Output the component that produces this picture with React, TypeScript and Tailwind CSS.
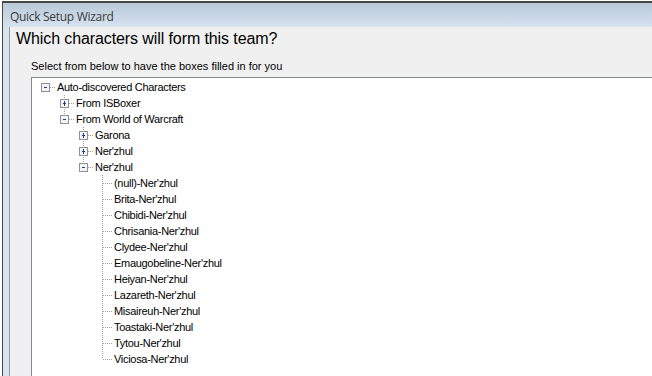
import React from 'react';

type Node = {
  label: string;
  level: number;
  box?: 'plus' | 'minus';
  last?: boolean;
};

const names = [
  '(null)',
  'Brita',
  'Chibidi',
  'Chrisania',
  'Clydee',
  'Emaugobeline',
  'Heiyan',
  'Lazareth',
  'Misaireuh',
  'Toastaki',
  'Tytou',
  'Viciosa',
];

const nodes: Node[] = [
  { label: 'Auto-discovered Characters', level: 0, box: 'minus', last: true },
  { label: 'From ISBoxer', level: 1, box: 'plus' },
  { label: 'From World of Warcraft', level: 1, box: 'minus', last: true },
  { label: 'Garona', level: 2, box: 'plus' },
  { label: "Ner'zhul", level: 2, box: 'plus' },
  { label: "Ner'zhul", level: 2, box: 'minus', last: true },
  ...names.map((n, i) => ({
    label: `${n}-Ner'zhul`,
    level: 3,
    last: i === names.length - 1,
  })),
];

function Gutter({ node }: { node: Node }) {
  const cx = 13 + 19 * node.level;
  const w = cx + 10;
  const x = cx + 0.5;
  return (
    <svg width={w} height={16} className="shrink-0" shapeRendering="crispEdges">
      {node.level > 0 && (
        <line x1={x} y1={0} x2={x} y2={node.last ? 8 : 16} stroke="#a0a0a0" strokeDasharray="1 1" />
      )}
      <line x1={node.box ? cx + 5 : cx + 1} y1={8.5} x2={w} y2={8.5} stroke="#a0a0a0" strokeDasharray="1 1" />
      {node.box && (
        <g>
          <rect x={cx - 3.5} y={4.5} width={8} height={8} fill="#f4f4f4" stroke="#919191" />
          <line x1={cx - 1} y1={8.5} x2={cx + 2} y2={8.5} stroke="#1e3e8a" />
          {node.box === 'plus' && <line x1={x} y1={6} x2={x} y2={11} stroke="#1e3e8a" />}
        </g>
      )}
    </svg>
  );
}

export default function App() {
  return (
    <div className="w-[652px] h-[376px] bg-white overflow-hidden pt-px pl-[2px] font-['Liberation_Sans',Arial,sans-serif]">
      <div className="h-full flex flex-col border-t-2 border-l border-[#474747] bg-[#d6e3f0]">
        <div className="h-[24px] shrink-0 flex items-center pl-[7px] pt-[3px] bg-gradient-to-b from-[#b9c9d8] to-[#d6e3f1] text-[12px] tracking-[-0.3px] text-[#3b3b3b] font-['Open_Sans',sans-serif]">
          Quick Setup Wizard
        </div>
        <div className="flex-1 flex min-h-0">
          <div className="w-[6px] shrink-0" />
          <div className="flex-1 flex flex-col min-h-0 bg-[#f0f0f0] border-l border-[#9a9a9a]">
            <div className="h-[24px] pl-[6px] pt-[2px] text-[16px] tracking-[-0.1px] leading-[20px] text-black">
              Which characters will form this team?
            </div>
            <div className="h-[26px] pl-[21px] pt-[9px] text-[11px] leading-[13px] text-black">
              Select from below to have the boxes filled in for you
            </div>
            <div className="flex-1 ml-[21px] border-l border-t border-[#828790] bg-white pt-px">
              {nodes.map((n, i) => (
                <div key={i} className="h-[16px] flex items-center">
                  <Gutter node={n} />
                  <span className="px-[2px] text-[11px] tracking-[-0.3px] leading-[16px] text-black whitespace-nowrap">{n.label}</span>
                </div>
              ))}
            </div>
          </div>
        </div>
      </div>
    </div>
  );
}
